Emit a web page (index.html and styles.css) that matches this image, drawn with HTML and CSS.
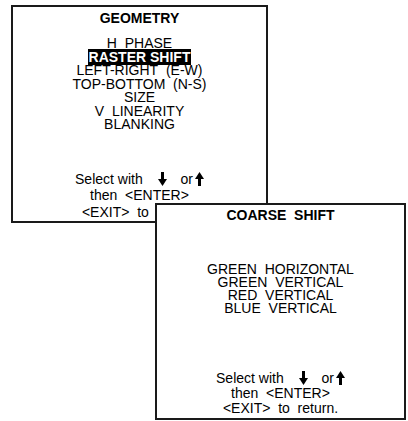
FILE: index.html
```html
<!DOCTYPE html>
<html lang="en">
<head>
    <meta charset="UTF-8">
    <title>Geometry - Coarse Shift</title>
    <link rel="stylesheet" href="styles.css">
</head>
<body>
    <div class="menu geometry">
        <div class="title">GEOMETRY</div>
        <div class="items">
            <div>H&nbsp;&nbsp;PHASE</div>
            <div><span class="selected">RASTER SHIFT</span></div>
            <div>LEFT-RIGHT&nbsp;&nbsp;(E-W)</div>
            <div>TOP-BOTTOM&nbsp;&nbsp;(N-S)</div>
            <div>SIZE</div>
            <div>V&nbsp;&nbsp;LINEARITY</div>
            <div>BLANKING</div>
        </div>
        <div class="help">
            <div>Select with
                <svg class="arrow down" width="9" height="14" viewBox="0 0 9 14"><rect x="3" y="0" width="3" height="8"/><polygon points="0,7 9,7 4.5,14"/></svg>
                <span class="or">or</span><svg class="arrow up" width="9" height="14" viewBox="0 0 9 14"><rect x="3" y="6" width="3" height="8"/><polygon points="0,7 9,7 4.5,0"/></svg>
            </div>
            <div>then&nbsp;&nbsp;&lt;ENTER&gt;</div>
            <div>&lt;EXIT&gt;&nbsp;&nbsp;to&nbsp;&nbsp;return.</div>
        </div>
    </div>

    <div class="menu coarse">
        <div class="title">COARSE&nbsp;&nbsp;SHIFT</div>
        <div class="items">
            <div>GREEN&nbsp;&nbsp;HORIZONTAL</div>
            <div>GREEN&nbsp;&nbsp;VERTICAL</div>
            <div>RED&nbsp;&nbsp;VERTICAL</div>
            <div>BLUE&nbsp;&nbsp;VERTICAL</div>
        </div>
        <div class="help">
            <div>Select with
                <svg class="arrow down" width="9" height="14" viewBox="0 0 9 14"><rect x="3" y="0" width="3" height="8"/><polygon points="0,7 9,7 4.5,14"/></svg>
                <span class="or">or</span><svg class="arrow up" width="9" height="14" viewBox="0 0 9 14"><rect x="3" y="6" width="3" height="8"/><polygon points="0,7 9,7 4.5,0"/></svg>
            </div>
            <div>then&nbsp;&nbsp;&lt;ENTER&gt;</div>
            <div>&lt;EXIT&gt;&nbsp;&nbsp;to&nbsp;&nbsp;return.</div>
        </div>
    </div>
</body>
</html>
```

FILE: styles.css
```css
body {
    margin: 0;
    background: #fff;
    color: #000;
    font-family: 'Liberation Sans', Arial, sans-serif;
    font-size: 14px;
    position: relative;
    width: 408px;
    height: 421px;
}
.menu {
    background: #fff;
    border: 2px solid #1a1a1a;
    box-sizing: border-box;
    text-align: center;
    display: flex;
    flex-direction: column;
}
.geometry {
    margin: 5px 0 0 11px;
    width: 257px;
    height: 218px;
    padding-top: 4px;
}
.coarse {
    position: absolute;
    left: 155px;
    top: 203px;
    width: 251px;
    height: 217px;
    padding-top: 3px;
}
.title {
    font-weight: bold;
    line-height: 14px;
}
.geometry .items {
    margin-top: 12px;
    line-height: 13.5px;
}
.coarse .items {
    margin-top: 41px;
    line-height: 13px;
}
.selected {
    background: #000;
    color: #fff;
    font-weight: bold;
    padding: 0 1px;
}
.help {
    margin-top: auto;
}
.geometry .help {
    line-height: 16.5px;
    padding-bottom: 1px;
}
.coarse .help {
    line-height: 15px;
    padding-bottom: 2px;
}
.arrow {
    vertical-align: -2px;
    fill: #000;
}
.arrow.down {
    margin: 0 10px 0 11px;
}
.arrow.up {
    margin-left: 2px;
}
```
